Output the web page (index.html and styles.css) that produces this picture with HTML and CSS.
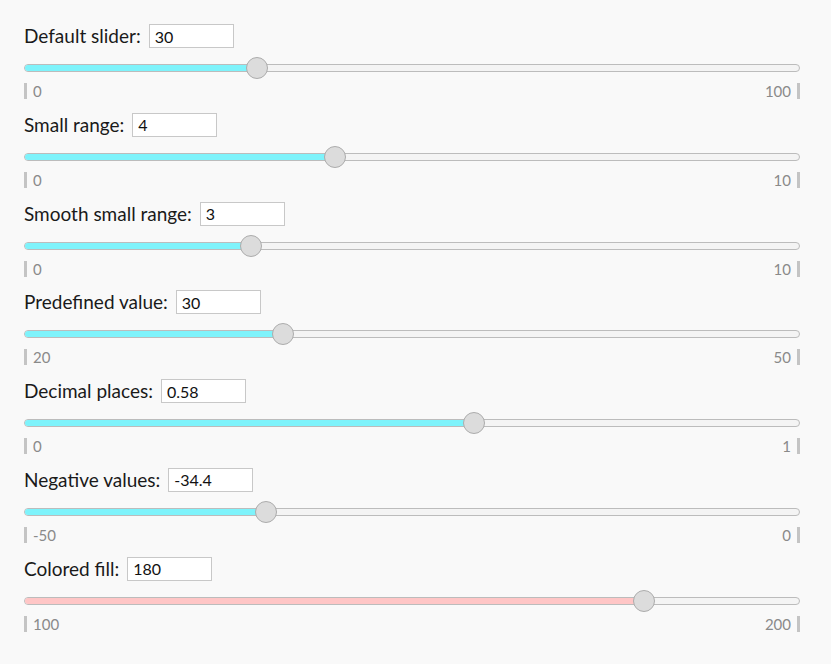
FILE: index.html
```html
<!DOCTYPE html>
<html>
<head>
<meta charset="utf-8">
<link rel="stylesheet" href="styles.css">
</head>
<body>
<div class="page">
  <div class="row">
    <div class="head"><label class="lbl">Default slider:</label><input class="val" type="text" value="30"></div>
    <div class="track"><div class="fill" style="width:30%"></div><div class="thumb" style="left:30%"></div></div>
    <div class="scale"><span class="min">0</span><span class="max">100</span></div>
  </div>
  <div class="row">
    <div class="head"><label class="lbl">Small range:</label><input class="val" type="text" value="4"></div>
    <div class="track"><div class="fill" style="width:40%"></div><div class="thumb" style="left:40%"></div></div>
    <div class="scale"><span class="min">0</span><span class="max">10</span></div>
  </div>
  <div class="row">
    <div class="head"><label class="lbl">Smooth small range:</label><input class="val" type="text" value="3"></div>
    <div class="track"><div class="fill" style="width:29.2%"></div><div class="thumb" style="left:29.2%"></div></div>
    <div class="scale"><span class="min">0</span><span class="max">10</span></div>
  </div>
  <div class="row">
    <div class="head"><label class="lbl">Predefined value:</label><input class="val" type="text" value="30"></div>
    <div class="track"><div class="fill" style="width:33.3%"></div><div class="thumb" style="left:33.3%"></div></div>
    <div class="scale"><span class="min">20</span><span class="max">50</span></div>
  </div>
  <div class="row">
    <div class="head"><label class="lbl">Decimal places:</label><input class="val" type="text" value="0.58"></div>
    <div class="track"><div class="fill" style="width:58%"></div><div class="thumb" style="left:58%"></div></div>
    <div class="scale"><span class="min">0</span><span class="max">1</span></div>
  </div>
  <div class="row">
    <div class="head"><label class="lbl">Negative values:</label><input class="val" type="text" value="-34.4"></div>
    <div class="track"><div class="fill" style="width:31.2%"></div><div class="thumb" style="left:31.2%"></div></div>
    <div class="scale"><span class="min">-50</span><span class="max">0</span></div>
  </div>
  <div class="row">
    <div class="head"><label class="lbl">Colored fill:</label><input class="val" type="text" value="180"></div>
    <div class="track"><div class="fill pink" style="width:80%"></div><div class="thumb" style="left:80%"></div></div>
    <div class="scale"><span class="min">100</span><span class="max">200</span></div>
  </div>
</div>
</body>
</html>
```
FILE: styles.css
```css
html, body {
  margin: 0;
  padding: 0;
  background: #f9f9f9;
}
.page {
  padding: 24px 31px 0 24px;
  font-family: "Lato", "Open Sans", sans-serif;
  color: #1a1a1a;
}
.row {
  height: 88.75px;
  display: flex;
  flex-direction: column;
}
.head {
  display: flex;
  align-items: center;
  height: 24px;
}
.lbl {
  font-size: 19px;
  margin-right: 8px;
  line-height: 24px;
}
.val {
  box-sizing: border-box;
  width: 85px;
  height: 24px;
  border: 1px solid #c8c8c8;
  background: #fff;
  padding: 0 5px;
  margin: 0;
  font-family: "Lato", "Open Sans", sans-serif;
  font-size: 16px;
  color: #111;
  outline: none;
}
.track {
  position: relative;
  margin-top: 16px;
  height: 8px;
  box-sizing: border-box;
  border: 1px solid #bcbcbc;
  border-radius: 4px;
  background: #f4f4f4;
}
.fill {
  height: 100%;
  background: #7ef3fb;
  border-radius: 3px 0 0 3px;
}
.fill.pink {
  background: #ffc6c6;
}
.thumb {
  position: absolute;
  top: 50%;
  width: 22px;
  height: 22px;
  box-sizing: border-box;
  margin-left: -11px;
  margin-top: -11px;
  border: 1px solid #acacac;
  border-radius: 50%;
  background: #dcdcdc;
}
.scale {
  margin-top: 11px;
  display: flex;
  justify-content: space-between;
  height: 16px;
  font-size: 15px;
  line-height: 16px;
  color: #8a8a8a;
}
.min {
  border-left: 3px solid #c4c4c4;
  padding-left: 6px;
}
.max {
  border-right: 3px solid #c4c4c4;
  padding-right: 6px;
}
```
